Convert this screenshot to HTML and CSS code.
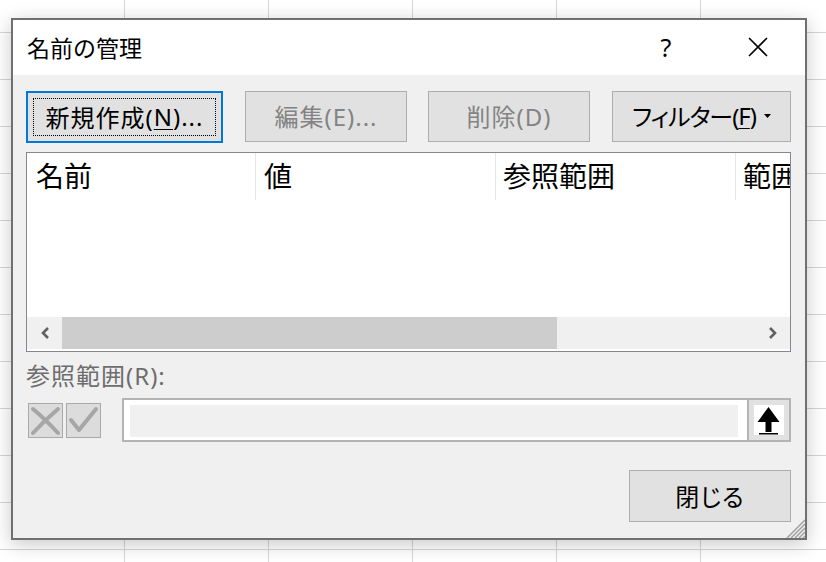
FILE: index.html
```html
<!DOCTYPE html>
<html lang="ja">
<head>
<meta charset="utf-8">
<title>名前の管理</title>
<link rel="stylesheet" href="styles.css">
</head>
<body>
<div class="dialog">
  <div class="titlebar">
    <span class="title">名前の管理</span>
    <span class="help">?</span>
    <span class="close"><svg width="20" height="20" viewBox="0 0 20 20"><path d="M1 1L19 19M19 1L1 19" stroke="#000" stroke-width="1.6" fill="none"/></svg></span>
  </div>
  <div class="content">
    <div class="toolbar">
      <button class="btn btn-new">新規作成(<u>N</u>)...</button>
      <button class="btn btn-edit disabled">編集(E)...</button>
      <button class="btn btn-del disabled">削除(D)</button>
      <button class="btn btn-filter">フィルター(<u>F</u>)<svg class="caret" width="7" height="4" viewBox="0 0 7 4"><path d="M0 0H7L3.5 4Z" fill="#000"/></svg></button>
    </div>
    <div class="list">
      <div class="header">
        <div class="col col-name">名前</div>
        <div class="col col-value">値</div>
        <div class="col col-ref">参照範囲</div>
        <div class="col col-scope">範囲</div>
      </div>
      <div class="list-space"></div>
      <div class="hscroll">
        <div class="arrow"><svg width="10" height="12" viewBox="0 0 10 12"><path d="M8 1L3 6L8 11" stroke="#606060" stroke-width="2.6" fill="none"/></svg></div>
        <div class="thumb"></div>
        <div class="track"></div>
        <div class="arrow"><svg width="10" height="12" viewBox="0 0 10 12"><path d="M2 1L7 6L2 11" stroke="#606060" stroke-width="2.6" fill="none"/></svg></div>
      </div>
    </div>
    <div class="ref-label">参照範囲(R):</div>
    <div class="ref-row">
      <div class="mini mini-cancel"><svg width="33" height="33" viewBox="0 0 33 33"><path d="M4 5Q16 15 29 29M29 5Q15 17 4 29" stroke="#a6a6a6" stroke-width="4" stroke-linecap="round" fill="none"/></svg></div>
      <div class="mini mini-ok"><svg width="33" height="33" viewBox="0 0 33 33"><path d="M4 16L12 26L29 5" stroke="#a6a6a6" stroke-width="4" stroke-linecap="round" stroke-linejoin="round" fill="none"/></svg></div>
      <div class="refbox">
        <div class="reffield-wrap"><div class="reffield"></div></div>
        <div class="collapse">
          <div class="collapse-icon"><svg width="30" height="30" viewBox="0 0 30 30"><path d="M14.5 2L25.5 17H17.5V27H11.5V17H3.5Z" fill="#000"/><rect x="5" y="28" width="19" height="1.5" fill="#000"/></svg></div>
        </div>
      </div>
    </div>
    <div class="footer">
      <button class="btn btn-close">閉じる</button>
    </div>
    <svg class="grip" width="20" height="20" viewBox="0 0 20 20"><path d="M20 2L2 20M20 6L6 20M20 10L10 20M20 14L14 20M20 18L18 20" stroke="#a0a0a0" stroke-width="1.5" fill="none"/></svg>
  </div>
</div>
</body>
</html>
```
FILE: styles.css
```css
html, body {
  margin: 0;
  width: 826px;
  height: 562px;
  overflow: hidden;
}
body {
  box-sizing: border-box;
  padding: 18px 0 0 11px;
  background-color: #fff;
  background-image:
    linear-gradient(to bottom, transparent 46px, #d6d6d6 46px),
    linear-gradient(to right, transparent 143px, #d6d6d6 143px);
  background-size: 100% 47px, 144px 100%;
  background-position: 0 -14px, -19px 0;
  font-family: "Noto Sans", "Noto Sans CJK JP", sans-serif;
  color: #000;
}
.dialog {
  box-sizing: border-box;
  width: 796px;
  height: 522px;
  border: 2px solid #707070;
  background: #f0f0f0;
  box-shadow: 0 4px 18px rgba(0, 0, 0, 0.22);
  display: flex;
  flex-direction: column;
}
.titlebar {
  height: 55px;
  flex: none;
  background: #fff;
  display: flex;
  align-items: center;
  padding: 0 27px 2px 14px;
  box-sizing: border-box;
}
.title {
  flex: 1;
  font-size: 23px;
}
.help {
  width: 40px;
  text-align: center;
  font-size: 25px;
  margin-right: 52px;
}
.close {
  width: 40px;
  display: flex;
  justify-content: center;
}
.content {
  flex: 1;
  position: relative;
  padding: 16px 14px 0 13px;
}
.toolbar {
  display: flex;
  height: 52px;
  align-items: flex-start;
}
.btn {
  box-sizing: border-box;
  margin: 0;
  padding: 0 0 2px;
  height: 51px;
  background: #e1e1e1;
  border: 1px solid #adadad;
  font-family: "Noto Sans", "Noto Sans CJK JP", sans-serif;
  font-size: 24px;
  letter-spacing: 1px;
  color: #000;
  display: flex;
  align-items: center;
  justify-content: center;
  position: relative;
}
.btn u {
  text-underline-offset: 3px;
  text-decoration-thickness: 1px;
}
.btn.disabled {
  color: #838383;
}
.btn-new {
  width: 197px;
  height: 52px;
  border: 2px solid #0078d7;
}
.btn-new::after {
  content: "";
  position: absolute;
  left: 5px;
  top: 5px;
  right: 5px;
  bottom: 5px;
  border: 1px dotted #000;
}
.btn-edit {
  width: 162px;
  margin-left: 22px;
}
.btn-del {
  width: 162px;
  margin-left: 21px;
}
.btn-filter {
  width: 179px;
  margin-left: 22px;
  font-feature-settings: "palt";
  letter-spacing: -1px;
}
.caret {
  margin-left: 8px;
}
.list {
  box-sizing: border-box;
  margin-top: 9px;
  height: 200px;
  border: 1px solid #828790;
  background: #fff;
  overflow: hidden;
  display: flex;
  flex-direction: column;
}
.header {
  height: 47px;
  flex: none;
  display: flex;
  white-space: nowrap;
}
.col {
  box-sizing: border-box;
  flex: none;
  font-size: 28px;
  padding: 0 0 4px 8px;
  display: flex;
  align-items: center;
  border-right: 1px solid #e5e5e5;
  overflow: hidden;
}
.col-name { width: 229px; padding-left: 9px; }
.col-value { width: 240px; }
.col-ref { width: 240px; padding-left: 7px; }
.col-scope { width: 120px; border-right: none; padding-left: 7px; }
.list-space {
  flex: 1;
}
.hscroll {
  height: 32px;
  flex: none;
  margin-bottom: 2px;
  display: flex;
  background: #f0f0f0;
}
.arrow {
  width: 35px;
  display: flex;
  align-items: center;
  justify-content: center;
}
.thumb {
  width: 495px;
  background: #cdcdcd;
}
.track {
  flex: 1;
}
.ref-label {
  margin-top: 12px;
  height: 24px;
  line-height: 24px;
  font-size: 24px;
  letter-spacing: 1px;
  color: #6d6d6d;
}
.ref-row {
  margin-top: 10px;
  height: 44px;
  display: flex;
  align-items: center;
}
.mini {
  box-sizing: border-box;
  width: 35px;
  height: 35px;
  border: 1px solid #a9a9a9;
  background: #dcdcdc;
  display: flex;
}
.mini-cancel {
  margin-left: 2px;
}
.mini-ok {
  margin-left: 3px;
}
.refbox {
  box-sizing: border-box;
  flex: 1;
  margin-left: 21px;
  height: 44px;
  border: 2px solid #b4b4b4;
  background: #fff;
  display: flex;
}
.reffield-wrap {
  flex: 1;
  padding: 5px 9px 3px 6px;
}
.reffield {
  height: 100%;
  background: #f0f0f0;
}
.collapse {
  width: 40px;
  border-left: 2px solid #b4b4b4;
  background: #e1e1e1;
  display: flex;
  align-items: center;
  justify-content: center;
}
.collapse-icon {
  width: 30px;
  height: 30px;
  background: #fff;
  display: flex;
}
.footer {
  margin-top: 28px;
  display: flex;
  justify-content: flex-end;
}
.btn-close {
  width: 162px;
  height: 52px;
  font-feature-settings: "palt";
}
.grip {
  position: absolute;
  right: 0;
  bottom: 0;
}
```
